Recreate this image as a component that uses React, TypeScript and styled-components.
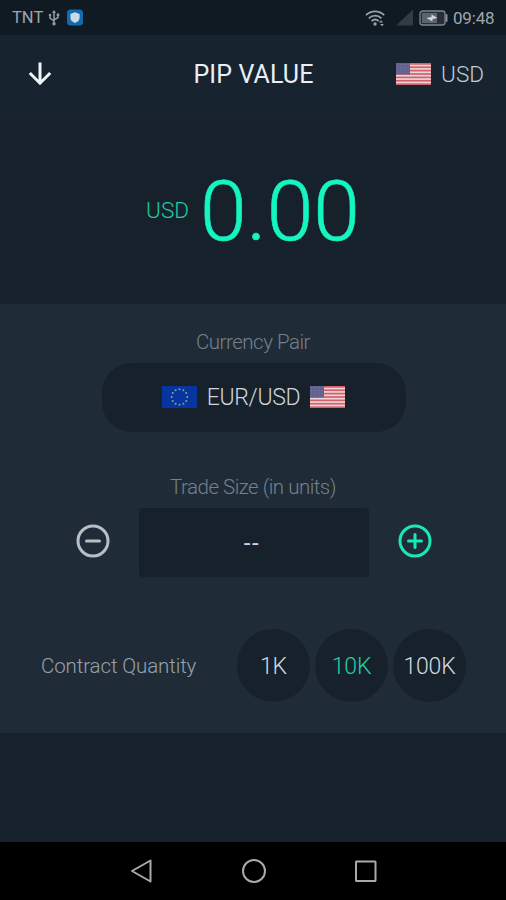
import styled, { createGlobalStyle } from 'styled-components';

const GlobalStyle = createGlobalStyle`
  * {
    box-sizing: border-box;
  }

  body {
    margin: 0;
    background: #16212c;
    font-family: Roboto, sans-serif;
  }

  button {
    border: 0;
    padding: 0;
    background: none;
    font-family: inherit;
  }
`;

const Screen = styled.div`
  display: flex;
  flex-direction: column;
  height: 900px;
  overflow: hidden;
  background: #16212c;
`;

const StatusBar = styled.div`
  display: flex;
  align-items: center;
  justify-content: space-between;
  height: 35px;
  padding: 0 11px 0 12px;
  background: #101a23;
  color: #a0a6ac;
  font-size: 17px;
`;

const StatusGroup = styled.div`
  display: flex;
  align-items: center;

  svg {
    display: block;
  }
`;

const Carrier = styled.span`
  width: 36px;
  font-size: 16.5px;
`;

const Clock = styled.span`
  width: 42px;
  margin-left: 5px;
  letter-spacing: -0.2px;
  white-space: nowrap;
`;

const Header = styled.header`
  display: grid;
  grid-template-columns: 1fr auto 1fr;
  align-items: center;
  height: 84px;
  padding: 0 22px 7px 26px;
  background: #17232e;
`;

const BackButton = styled.button`
  display: flex;
  width: 28px;
  height: 28px;
`;

const Title = styled.h1`
  margin: 2px 3px 0 0;
  color: #e9eff6;
  font-size: 25px;
  font-weight: 400;
  line-height: 28px;
  letter-spacing: 0.1px;
`;

const AccountCurrency = styled.div`
  display: flex;
  align-items: center;
  justify-content: flex-end;
  gap: 10px;
  color: #c3cbd6;
  font-size: 22.5px;
  font-weight: 300;
`;

const Result = styled.section`
  display: flex;
  align-items: center;
  justify-content: center;
  gap: 11px;
  height: 185px;
  color: #14f5c0;
`;

const ResultCurrency = styled.span`
  padding-bottom: 4px;
  color: #20c9a2;
  font-size: 22.5px;
  font-weight: 300;
  line-height: 28px;
`;

const ResultValue = styled.span`
  font-size: 84px;
  font-weight: 300;
  line-height: 96px;
  -webkit-text-stroke: 0.6px currentColor;
`;

const Panel = styled.section`
  display: flex;
  flex-direction: column;
  align-items: center;
  height: 429px;
  padding-top: 24px;
  background: #1f2c38;
`;

const FieldLabel = styled.div`
  color: #74808b;
  font-size: 20.5px;
  font-weight: 300;
  line-height: 28px;
  letter-spacing: -0.5px;
`;

const PairButton = styled.button`
  display: flex;
  align-items: center;
  justify-content: center;
  gap: 10px;
  width: 304px;
  height: 69px;
  margin: 7px 0 41px 1px;
  border-radius: 30px;
  background: #16212c;
  color: #cfd5de;
  font-size: 23px;
  font-weight: 300;
  letter-spacing: -0.3px;

  svg {
    margin-bottom: 2px;
  }
`;

const SizeRow = styled.div`
  display: flex;
  align-items: center;
  justify-content: space-between;
  width: 356px;
  margin: 7px 0 0 1px;
`;

const RoundIcon = styled.button<{ $color: string }>`
  display: flex;
  padding-bottom: 4px;
  color: ${({ $color }) => $color};
`;

const SizeField = styled.div`
  display: flex;
  align-items: center;
  justify-content: center;
  width: 230px;
  height: 69px;
  padding-right: 3px;
  border-radius: 4px;
  background: #16212c;
  color: #cfd5de;
  font-size: 24px;
  letter-spacing: 1.6px;
`;

const QuantityRow = styled.div`
  display: flex;
  align-items: center;
  justify-content: space-between;
  width: 100%;
  margin-top: 52px;
  padding: 0 40px 0 41px;
`;

const QuantityLabel = styled.span`
  color: #98a1ab;
  font-size: 20.5px;
  font-weight: 300;
  letter-spacing: -0.12px;
`;

const QuantityOptions = styled.div`
  display: flex;
  gap: 5px;
`;

const QuantityOption = styled.button<{ $active?: boolean }>`
  width: 73px;
  height: 73px;
  padding-top: 2px;
  border-radius: 50%;
  background: #16212c;
  color: ${({ $active }) => ($active ? '#20cfa6' : '#d3d9e1')};
  font-size: 23px;
  font-weight: 300;
  letter-spacing: -0.2px;
`;

const NavBar = styled.nav`
  display: flex;
  align-items: center;
  justify-content: space-between;
  height: 58px;
  margin-top: auto;
  padding: 0 127px 0 128px;
  background: #000;
`;

const stripes = [0, 1, 2, 3, 4, 5, 6];

const UsFlag = () => (
  <svg width="35" height="22" viewBox="0 0 35 22">
    <rect width="35" height="22" fill="#ecd5d9" />
    {stripes.map((i) => (
      <rect key={i} y={i * 3.385} width="35" height="1.69" fill="#d2606d" />
    ))}
    <rect width="14" height="11.5" fill="#62628e" />
    {stripes.slice(0, 4).map((row) =>
      stripes.slice(0, 5).map((col) => (
        <circle key={`${row}-${col}`} cx={1.7 + col * 2.6} cy={1.7 + row * 2.7} r="0.4" fill="#9292b3" />
      ))
    )}
  </svg>
);

const EuFlag = () => (
  <svg width="35" height="22" viewBox="0 0 35 22">
    <rect width="35" height="22" fill="#0735a0" />
    {Array.from({ length: 12 }, (_, i) => {
      const angle = (i * Math.PI) / 6;
      return (
        <circle
          key={i}
          cx={17.5 + 7.8 * Math.sin(angle)}
          cy={11 - 7.8 * Math.cos(angle)}
          r="1"
          fill="#8ea579"
        />
      );
    })}
  </svg>
);

const quantities = ['1K', '10K', '100K'];

const App = () => {
  const selected = '10K';

  return (
    <>
      <GlobalStyle />
      <Screen>
        <StatusBar>
          <StatusGroup>
            <Carrier>TNT</Carrier>
            <svg width="12" height="17" viewBox="0 0 12 17" fill="none" stroke="#9299a0" strokeWidth="1.5">
              <path d="M6 2v12M2 6v3l4 3M10 5.5v3L6 11" />
              <path d="M4 4l2-3 2 3z" fill="#9299a0" stroke="none" />
              <circle cx="6" cy="14.7" r="1.7" fill="#9299a0" stroke="none" />
              <circle cx="2" cy="6" r="1.3" fill="#9299a0" stroke="none" />
              <path d="M8.7 4.5h2.6v2.6H8.7z" fill="#9299a0" stroke="none" />
            </svg>
            <svg width="23" height="17" viewBox="0 0 23 17">
              <rect x="7" y="0.5" width="16" height="16" rx="3.5" fill="#126bac" />
              <path d="M15 3.2l4.6 1.8v3.7c0 2.4-2 4.2-4.6 5.3-2.6-1.1-4.6-2.9-4.6-5.3V5z" fill="#c8dce8" />
            </svg>
          </StatusGroup>
          <StatusGroup>
            <svg width="21" height="18" viewBox="0 0 21 18" fill="none" stroke="#9aa0a6" strokeWidth="1.8">
              <path d="M1 6.2c5.2-5 13-5 18.2 0M3.8 9.3c3.7-3.6 9-3.6 12.6 0M6.5 12.2c2.2-2.1 5-2.1 7.2 0" />
              <circle cx="10" cy="15" r="1.7" fill="#9aa0a6" stroke="none" />
              <path d="M14 13.5l2-2.2 2 2.2zM15 15l2 2.2 2-2.2z" fill="#9aa0a6" stroke="none" />
            </svg>
            <svg width="28" height="18" viewBox="0 0 28 18">
              <path d="M27 0.5v16H10z" fill="#333c44" />
            </svg>
            <svg width="34" height="18" viewBox="0 0 34 18">
              <rect x="6" y="2" width="25" height="14" rx="2.5" fill="#262f37" stroke="#7d848b" strokeWidth="1.3" />
              <rect x="8" y="4" width="15" height="10" fill="#5c646b" />
              <rect x="31.5" y="5" width="2" height="8" rx="1" fill="#888f96" />
              <path d="M12.5 9l5-1V5.5l6 3.5-5 1v2.5z" fill="#d5d8da" />
            </svg>
            <Clock>09:48</Clock>
          </StatusGroup>
        </StatusBar>

        <Header>
          <BackButton aria-label="Close">
            <svg width="28" height="28" viewBox="0 0 28 28" fill="none" stroke="#eef3f8" strokeWidth="3">
              <path d="M14 2.5v20M3.8 13L14 23.2 24.2 13" />
            </svg>
          </BackButton>
          <Title>PIP VALUE</Title>
          <AccountCurrency>
            <UsFlag />
            USD
          </AccountCurrency>
        </Header>

        <Result>
          <ResultCurrency>USD</ResultCurrency>
          <ResultValue>0.00</ResultValue>
        </Result>

        <Panel>
          <FieldLabel>Currency Pair</FieldLabel>
          <PairButton>
            <EuFlag />
            EUR/USD
            <UsFlag />
          </PairButton>

          <FieldLabel>Trade Size (in units)</FieldLabel>
          <SizeRow>
            <RoundIcon $color="#b9bec4" aria-label="Decrease">
              <svg width="34" height="34" viewBox="0 0 34 34" fill="none" stroke="currentColor" strokeWidth="3">
                <circle cx="17" cy="17" r="15" />
                <path d="M10.5 17h13" strokeLinecap="round" />
              </svg>
            </RoundIcon>
            <SizeField>--</SizeField>
            <RoundIcon $color="#18e9b6" aria-label="Increase">
              <svg width="34" height="34" viewBox="0 0 34 34" fill="none" stroke="currentColor" strokeWidth="3">
                <circle cx="17" cy="17" r="15" />
                <path d="M10.5 17h13M17 10.5v13" strokeLinecap="round" />
              </svg>
            </RoundIcon>
          </SizeRow>

          <QuantityRow>
            <QuantityLabel>Contract Quantity</QuantityLabel>
            <QuantityOptions>
              {quantities.map((quantity) => (
                <QuantityOption key={quantity} $active={quantity === selected}>
                  {quantity}
                </QuantityOption>
              ))}
            </QuantityOptions>
          </QuantityRow>
        </Panel>

        <NavBar>
          <svg width="26" height="26" viewBox="0 0 26 26" fill="none" stroke="#aaa" strokeWidth="2">
            <path d="M22.5 2.5v21L4 13z" strokeLinejoin="round" />
          </svg>
          <svg width="26" height="26" viewBox="0 0 26 26" fill="none" stroke="#aaa" strokeWidth="2">
            <circle cx="13" cy="13" r="11" />
          </svg>
          <svg width="26" height="26" viewBox="0 0 26 26" fill="none" stroke="#aaa" strokeWidth="2">
            <rect x="3" y="3.5" width="19.5" height="19.5" rx="0.5" />
          </svg>
        </NavBar>
      </Screen>
    </>
  );
};

export default App;
